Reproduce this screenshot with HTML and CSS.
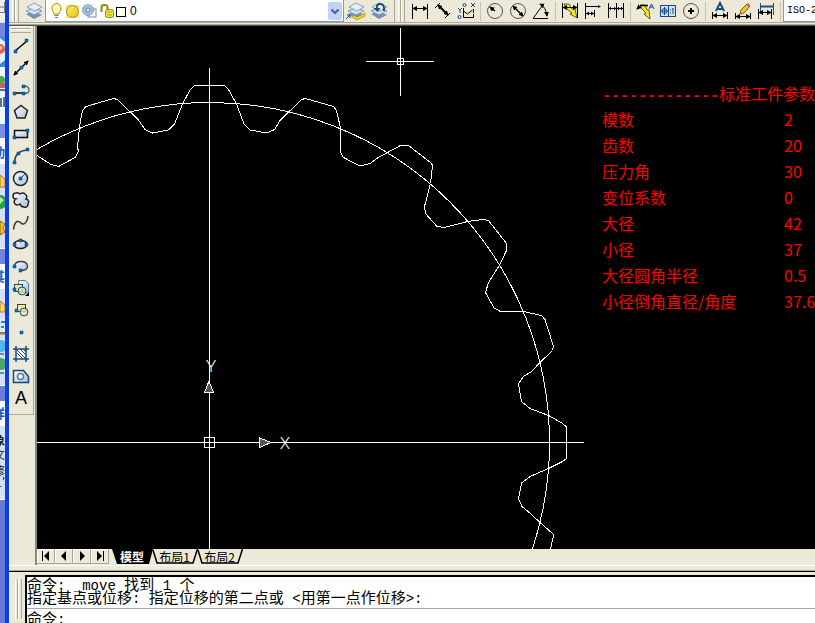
FILE: index.html
```html
<!DOCTYPE html>
<html lang="zh-CN">
<head>
<meta charset="utf-8">
<title>CAD</title>
<link rel="stylesheet" href="styles.css">
</head>
<body>
<svg width="0" height="0" class="defs" aria-hidden="true">
  <defs>
    <linearGradient id="fill" x1="0" y1="0" x2="1" y2="1"><stop offset="0" stop-color="#fff"/><stop offset="1" stop-color="#a9bfd6"/></linearGradient>
    <linearGradient id="sun" x1="0" y1="0" x2="1" y2="1"><stop offset="0" stop-color="#fff45a"/><stop offset="1" stop-color="#f0bc1c"/></linearGradient>
    <marker id="ar" viewBox="0 0 6 6" refX="5" refY="3" markerWidth="5" markerHeight="5" markerUnits="userSpaceOnUse" orient="auto-start-reverse"><path d="M0 0L6 3L0 6z"/></marker>
    <g id="stack"><path d="M2 13l8-3 8 4-8 4z" fill="#7591b4"/><path d="M2 10l8-3 8 3-8 4z" fill="#d4e1ee" stroke="#6f8bae" stroke-width=".8"/><path d="M3 6l7-4 8 4-7 4z" fill="#e4eef8" stroke="#6f8bae" stroke-width=".8"/></g>
    <g id="bolt"><path d="M5 4h5l3 5h3l2 9-7-4 2-1-5-4z" fill="#f6e928" stroke="#5b5a19"/></g>
  </defs>
</svg>

<div class="screen">
  <aside class="desktop" aria-label="desktop">
    <svg width="5" height="623">
      <rect width="5" height="623" fill="#d6dff7"/>
      <rect width="5" height="22" fill="#efeee6"/><path d="M4.500 2V12M0 7h4M0 12.500h5" stroke="#777"/>
      <rect y="23" width="5" height="14" fill="#6f89dc"/>
      <rect y="37" width="5" height="30" fill="#3e86d6"/><path d="M0 38L5 42V60L0 64z" fill="#e5effb"/><circle cy="49" r="5" fill="#ea6248"/><circle cy="48" r="2" fill="#ffd5c8"/>
      <rect y="67" width="5" height="57" fill="#f1f5ff"/><circle cx="1" cy="80" r="4" fill="#48aa55"/><rect y="83" width="5" height="5" fill="#c16652"/><path d="M0 90h5M1 98v9M4 97v10" stroke="#59738d" stroke-width="2"/>
      <rect y="124" width="5" height="14" fill="#7990de"/>
      <rect y="138" width="5" height="26" fill="#fff"/><text x="5" y="157" class="desk-bold">动</text>
      <path d="M0 175l5 4v8H0z" fill="#f6d568" stroke="#a77119"/><circle cy="202" r="7" fill="#2f9b42"/><path d="M0 197l4 3-4 4z" fill="#b6e9b3"/><path d="M0 221l5 3-2 4 2 4-5 3z" fill="#f0bf3e" stroke="#9b6511"/>
      <rect y="248" width="5" height="16" fill="#6f87da"/><path d="M0 248.500h5" stroke="#fff"/>
      <rect y="264" width="5" height="25" fill="#fff"/><text x="5" y="281" class="desk-bold">其</text>
      <path d="M0 301l5 4v7H0z" fill="#f7d96d" stroke="#af7d23"/><rect y="319" width="5" height="13" fill="#dcecff"/><path d="M0 333h5M1 322h4M1 327h3" stroke="#387ad1" stroke-width="2"/><path d="M0 333.500h5" stroke="#b77923" stroke-width="2"/><circle cx="1" cy="346" r="6" fill="#54b5e9"/><circle cx="1" cy="364" r="6" fill="#49a867"/><path d="M0 354h4M0 373h4" stroke="#7186ad" stroke-width="2"/>
      <rect y="385" width="5" height="16" fill="#6a80d8"/><path d="M0 385.500h5" stroke="#fff"/>
      <rect y="401" width="5" height="25" fill="#fff"/><text x="5" y="418" class="desk-bold">详</text>
      <text x="5" y="445" class="desk-text strong">象</text><text x="5" y="459" class="desk-text">文</text><text x="5" y="475" class="desk-text">修</text><text x="5" y="487" class="desk-text">1'</text>
      <rect y="499" width="5" height="124" fill="#667bd5"/><path d="M0 499.500h5" stroke="#fff"/>
    </svg>
  </aside>

  <main class="app">
    <header class="topbar">
      <div class="bar layers">
        <span class="grip"></span>
        <button class="tool" aria-label="Layer properties"><svg width="22" height="22" viewBox="-1 -1 22 22"><use href="#stack"/></svg></button>
        <div class="combo layer-combo">
          <svg class="layer-icons" width="78" height="20">
            <path d="M8 13c0-2-2-3-2-6a4 4 0 0 1 9 0c0 3-2 4-2 6z" fill="#fffbb0" stroke="#a9871d"/><path d="M8.500 14.500h4M9 16.500h3" stroke="#777"/>
            <rect x="20" y="4" width="13" height="13" fill="#ffe94b"/><circle cx="26.500" cy="10.500" r="6" fill="url(#sun)" stroke="#7a8ca0"/>
            <rect x="42" y="8" width="8" height="8" fill="#fff" stroke="#6b87ad"/><circle cx="42" cy="9" r="5.500" fill="#a5bdd9" stroke="#6988af" stroke-dasharray="2 1"/><circle cx="42" cy="9" r="2" fill="#dce7f2" stroke="#6988af"/>
            <path d="M55.500 11V6q0-2 3-2t3 2v3" fill="none" stroke="#8b8b12" stroke-width="2"/><rect x="59.500" y="8.500" width="8" height="8" rx="2" fill="#f3e73b" stroke="#8b8b12"/><path d="M61 11h5M61 14h5" stroke="#aaa41c"/>
            <rect x="70.500" y="6.500" width="9" height="9" fill="#fff" stroke="#000"/>
          </svg>
          <select aria-label="Layer"><option>0</option></select>
          <span class="arrow"><svg width="14" height="18"><path d="M3.500 7.500L7 11l3.500-3.500" fill="none" stroke="#4d6185" stroke-width="2"/></svg></span>
        </div>
        <button class="tool" aria-label="Make object layer current"><svg width="22" height="22" viewBox="-1 -1 22 22"><use href="#stack"/><path d="M7 14l4 2 8-4v3l-8 4-5-3z" fill="#f3d925" stroke="#a18c19" stroke-width=".7"/><path d="M0 18l4-4M1 14h3v3" stroke="#174a83" fill="none"/></svg></button>
        <button class="tool" aria-label="Layer previous"><svg width="22" height="22" viewBox="-1 -1 22 22"><use href="#stack"/><path d="M15 10Q16 2 10 3Q7 4 8 9" fill="none" stroke="#174a83" stroke-width="2"/><path d="M4.500 7h7l-3 4z" fill="#174a83"/></svg></button>
      </div>
      <div class="bar dims">
        <span class="grip"></span>
        <button class="tool" aria-label="Linear"><svg width="22" height="22"><path d="M3.500 4v15M18.500 4v15" stroke="#000"/><path d="M4 8.500h14" stroke="#000" marker-start="url(#ar)" marker-end="url(#ar)"/></svg></button>
        <button class="tool" aria-label="Aligned"><svg width="22" height="22"><path d="M3 8l5-5M13 18l5-5" stroke="#000"/><path d="M6 5l10 10" stroke="#000" stroke-width="2" marker-start="url(#ar)" marker-end="url(#ar)"/></svg></button>
        <button class="tool" aria-label="Ordinate"><svg width="22" height="22"><path d="M8.500 8v9.500h10V14M8.500 11l4 3 5-4M18.500 9v4" stroke="#000" fill="none"/><path d="M3 8l2 2 2-2M5 10v3M16 3l4 4M20 3l-4 4" stroke="#174a83" fill="none"/><circle cx="9.500" cy="5" r="1.500" fill="none" stroke="#174a83"/><circle cx="4.500" cy="17" r="1.500" fill="none" stroke="#174a83"/></svg></button>
        <span class="sep"></span>
        <button class="tool" aria-label="Radius"><svg width="22" height="22"><circle cx="11" cy="11" r="7.500" fill="none" stroke="#555"/><path d="M11 11L6 7" stroke="#000" stroke-width="1.500" marker-end="url(#ar)"/></svg></button>
        <button class="tool" aria-label="Diameter"><svg width="22" height="22"><circle cx="11" cy="11" r="7.500" fill="none" stroke="#555"/><path d="M6 6l10 10" stroke="#000" stroke-width="1.500" marker-start="url(#ar)" marker-end="url(#ar)"/></svg></button>
        <button class="tool" aria-label="Angular"><svg width="22" height="22"><path d="M18 18.500H3L12 6" stroke="#000" fill="none"/><path d="M10 4q6 3 7 12" stroke="#000" fill="none" marker-start="url(#ar)" marker-end="url(#ar)"/></svg></button>
        <span class="sep"></span>
        <button class="tool" aria-label="Quick dimension"><svg width="22" height="22"><use href="#bolt"/><path d="M3.500 3v15M18.500 3v15" stroke="#000"/><path d="M4 7.500h14" stroke="#000" marker-start="url(#ar)" marker-end="url(#ar)"/></svg></button>
        <button class="tool" aria-label="Baseline"><svg width="22" height="22"><path d="M3.500 3v16M12.500 10v7M4 6.500h14M4 13.500h8" stroke="#000"/><path d="M16 5l3 1.500-3 1.500zM4 13.500l3-2v4zM12 13.500l-3-2v4z"/></svg></button>
        <button class="tool" aria-label="Continue"><svg width="22" height="22"><path d="M3.500 3v15M11.500 3v15M18.500 3v15M4 8.500h14" stroke="#000"/><path d="M4 8.500l2-2v4zM11 8.500l-2-2v4zM12 8.500l2-2v4zM18 8.500l-2-2v4z"/></svg></button>
        <span class="sep"></span>
        <button class="tool" aria-label="Quick leader"><svg width="22" height="22"><path d="M6 5h5l2 5h2l1 9-6-5 2-1-4-4z" fill="#f6e928" stroke="#5b5a19"/><path d="M14 5.500H7L3 9" fill="none" stroke="#000" stroke-width="1.500" marker-end="url(#ar)"/><path d="M15 9l2.500-5L20 9M16 7h3" fill="none" stroke="#174a83"/></svg></button>
        <button class="tool" aria-label="Tolerance"><svg width="22" height="22"><rect x="3.500" y="5.500" width="15" height="11" fill="#cfe2f3" stroke="#174a83"/><path d="M11.500 5v12M4 11h7M7.500 7v8M16 8v6M13.500 9.500v1M13.500 12.500v1M15 9h1" stroke="#174a83"/><circle cx="7.500" cy="11" r="2.500" fill="none" stroke="#174a83"/></svg></button>
        <button class="tool" aria-label="Center mark"><svg width="22" height="22"><circle cx="11" cy="11" r="7.500" fill="none" stroke="#555"/><path d="M11 8v6M8 11h6" stroke="#000" stroke-width="2"/></svg></button>
        <span class="sep"></span>
        <button class="tool" aria-label="Dimension edit"><svg width="22" height="22"><path d="M7 11l4-8 4 8M8 9h6" fill="none" stroke="#1b4f86" stroke-width="2"/><path d="M3.500 12v7M18.500 12v7" stroke="#000"/><path d="M4 15.500h14" stroke="#000" marker-start="url(#ar)" marker-end="url(#ar)"/></svg></button>
        <button class="tool" aria-label="Dimension text edit"><svg width="22" height="22"><path d="M3.500 13v6M18.500 13v6" stroke="#000"/><path d="M4 16.500h14" stroke="#000" marker-start="url(#ar)" marker-end="url(#ar)"/><path d="M8 14l1-4 6-6 3 2-6 7z" fill="#f0c936" stroke="#765a1c"/><path d="M14 5l2-2 2 2-1 2z" fill="#c9675d"/></svg></button>
        <button class="tool" aria-label="Dimension update"><svg width="22" height="22"><path d="M5.500 3v9M18.500 3v12" stroke="#1b4f86"/><path d="M6 6.500h12" stroke="#1b4f86" stroke-width="2"/><path d="M3.500 9v10M16.500 9v10" stroke="#000"/><path d="M4 12.500h12" stroke="#000" marker-start="url(#ar)" marker-end="url(#ar)"/></svg></button>
        <span class="sep"></span>
        <div class="combo style-combo"><select aria-label="Dimension style"><option>ISO-25</option></select></div>
      </div>
    </header>

    <div class="workspace">
      <div class="side">
        <nav class="toolbox" aria-label="Draw">
          <span class="grip-h"></span>
          <button class="draw" aria-label="Line"><svg width="22" height="22"><path d="M5 16L17 6" stroke="#000" stroke-width="1.500"/><path class="pt" d="M4 15h3v3H4zM15 4h3v3h-3z"/></svg></button>
          <button class="draw" aria-label="Construction line"><svg width="22" height="22"><path d="M4 18L18 4" stroke="#000" stroke-width="1.500" marker-start="url(#ar)" marker-end="url(#ar)"/><path class="pt" d="M10 9h3v3h-3z"/></svg></button>
          <button class="draw" aria-label="Polyline"><svg width="22" height="22"><path d="M4 14h10" stroke="#000" stroke-width="1.500"/><path d="M14 7q5 0 5 4t-5 3" fill="none" stroke="#666" stroke-width="1.500"/><path class="pt" d="M3 13h3v3H3zM12 13h3v3h-3zM12 6h3v3h-3z"/></svg></button>
          <button class="draw" aria-label="Polygon"><svg width="22" height="22"><path d="M11 4.500l6.500 5L15 17H7L4.500 9.500z" fill="url(#fill)" stroke="#222" stroke-width="1.500"/></svg></button>
          <button class="draw" aria-label="Rectangle"><svg width="22" height="22"><path d="M4.500 7.500h13v7h-13z" fill="url(#fill)" stroke="#111" stroke-width="1.500"/><path class="pt" d="M3 13h3v3H3zM16 6h3v3h-3z"/></svg></button>
          <button class="draw" aria-label="Arc"><svg width="22" height="22"><path d="M4.500 17Q5 6 17 5" fill="none" stroke="#444" stroke-width="1.500"/><path class="pt" d="M3 16h3v3H3zM7 7h3v3H7zM16 3h3v3h-3z"/></svg></button>
          <button class="draw" aria-label="Circle"><svg width="22" height="22"><circle cx="10.500" cy="11.500" r="7" fill="url(#fill)" stroke="#222" stroke-width="1.500"/><path d="M10 12l5-5" stroke="#174a83"/><path class="pt" d="M9 10h3v3H9z"/></svg></button>
          <button class="draw" aria-label="Revision cloud"><svg width="22" height="22"><path d="M6 10a3 3 0 0 1 0-6q2-1 4 1 3-2 5 0 3 2 1 5 4 1 2 5 0 4-4 3-3 0-4-3-3 2-5 0-2-3 1-5z" fill="url(#fill)" stroke="#222" stroke-width="1.500"/></svg></button>
          <button class="draw" aria-label="Spline"><svg width="22" height="22"><path d="M3.500 18.500C5 8 9 10 11 12S17 13 18 5" fill="none" stroke="#333" stroke-width="1.500"/></svg></button>
          <button class="draw" aria-label="Ellipse"><svg width="22" height="22"><ellipse cx="10.500" cy="11.500" rx="6.500" ry="4" fill="url(#fill)" stroke="#222" stroke-width="1.500"/><path class="pt" d="M3 10h3v3H3zM15 10h3v3h-3zM9 6h3v3H9z"/></svg></button>
          <button class="draw" aria-label="Ellipse arc"><svg width="22" height="22"><path d="M4.500 11Q5 6.500 11 6.500T17.500 11 10 15.500" fill="url(#fill)" stroke="#444" stroke-width="1.500"/><path class="pt" d="M3 10h3v3H3zM9 14h3v3H9z"/></svg></button>
          <button class="draw" aria-label="Insert block"><svg width="22" height="22"><path d="M8.500 3.500h7l3 3v9h-10z" fill="url(#fill)" stroke="#527ba4"/><rect x="4.500" y="7.500" width="8" height="7" fill="#f5ea8c" stroke="#174a83"/><circle cx="12" cy="14" r="4" fill="#e5dfa0" fill-opacity=".8" stroke="#174a83"/><path class="pt" d="M3 11h3v3H3z"/><path d="M19 15v4h-4z"/></svg></button>
          <button class="draw" aria-label="Make block"><svg width="22" height="22"><rect x="7.500" y="5.500" width="8" height="7" fill="#f5ea8c" stroke="#174a83"/><circle cx="14" cy="13" r="4" fill="#e5dfa0" fill-opacity=".8" stroke="#174a83"/><path class="pt" d="M5 10h3v3H5z"/></svg></button>
          <button class="draw" aria-label="Point"><svg width="22" height="22"><path class="pt" d="M10 10h3v3h-3z"/></svg></button>
          <button class="draw" aria-label="Hatch"><svg width="22" height="22"><path d="M6 6h10v10H6z" fill="#fff"/><path d="M7 10l6 6M7 7l9 9M10 6l6 6M13 6l3 3" stroke="#174a83"/><path d="M3 6h16M3 16h16M6 3v16M16 3v16" stroke="#174a83" stroke-width="1.500"/></svg></button>
          <button class="draw" aria-label="Region"><svg width="22" height="22"><path d="M3.500 5.500h10l5 6v6h-15z" fill="url(#fill)" stroke="#174a83" stroke-width="1.500"/><circle cx="10.500" cy="11.500" r="3" fill="#fff" stroke="#527ba4" stroke-width="1.500"/></svg></button>
          <button class="draw letter" aria-label="Multiline text">A</button>
        </nav>
      </div>

      <section class="view">
        <div class="canvas">
          <svg class="drawing" width="100%" height="100%">
            <g transform="translate(-37 -26)" class="ink">
              <path d="M209.500 68V549M37 442.500H584"/>
              <rect x="204.500" y="437.500" width="10" height="10"/>
              <circle cx="209.500" cy="442.500" r="340"/>
              <path d="M37 155.500L51 164.500 58.500 166.500 75 157.500 78.500 151.500 77.500 147.500 79.500 126.500 82.500 110.500 86 106.500 113.500 98.500 117.500 99.500 138.500 120 145 129.500 152.500 133 168.500 130 174.500 124 182.500 104 190 90 194.500 85.500H224.500L228.500 89.500 236.500 104 244 124 250 130 267 133 274.500 129.500 280 120.500 301.500 99.500 305.500 98.500 333.500 106.500 336.500 110.500 340.500 128V152.500L343.500 157.500 360 166 370 163.500 377.500 158 400.500 145.500H408.500L430.500 162.500 432.500 165 430.500 183.500 424.500 206.500 425.500 213.500 437 226.500 444.500 227.500 467.500 221.500 483.500 219.500 488.500 220.500 506.500 243.500V250.500L499.500 265 488.500 282.500 485.500 292.500 494 308 500.500 311.500H523.500L541.500 315.500 545 319.500 553.500 346.500 552.500 350.500 540 362.500 531 372 523.500 376.500 518.500 383.500 521.500 401.500 530 408.500 548.500 415.500 562.500 423.500 566.500 427V458.500L562.500 461.500 548.500 468.500 530 476.500 521.500 483 518.500 499 522 506.500 531 514 540 522.500 553.500 534.500 553 538 550.500 549"/>
              <path d="M400.500 28V96M366 61.500H434M397.500 58.500h6v6h-6z"/>
              <path d="M209 381L204.500 392.500H213.500zM259.500 438V447.500L271 442.500z" class="arrowhead"/>
            </g>
            <text x="174" y="346" class="axis">Y</text><text x="248" y="423" class="axis">X</text>
          </svg>
          <table class="params">
            <caption><span class="dash">-------------</span>标准工件参数<span class="dash">-</span></caption>
            <tbody>
              <tr><th scope="row">模数</th><td>2</td></tr>
              <tr><th scope="row">齿数</th><td>20</td></tr>
              <tr><th scope="row">压力角</th><td>30</td></tr>
              <tr><th scope="row">变位系数</th><td>0</td></tr>
              <tr><th scope="row">大径</th><td>42</td></tr>
              <tr><th scope="row">小径</th><td>37</td></tr>
              <tr><th scope="row">大径圆角半径</th><td>0.5</td></tr>
              <tr><th scope="row">小径倒角直径/角度</th><td>37.6</td></tr>
            </tbody>
          </table>
        </div>
        <div class="tabs">
          <button class="step" aria-label="First"><svg width="10" height="10"><path d="M1 0h1v10H1zM8 0v10L3 5z"/></svg></button>
          <button class="step" aria-label="Previous"><svg width="10" height="10"><path d="M7 0v10L2 5z"/></svg></button>
          <button class="step" aria-label="Next"><svg width="10" height="10"><path d="M3 0v10l5-5z"/></svg></button>
          <button class="step" aria-label="Last"><svg width="10" height="10"><path d="M2 0v10l5-5zM8 0h1v10H8z"/></svg></button>
          <button class="tab active"><svg width="41" height="15"><path d="M0 0h41l-4 15H5z"/></svg><span>模型</span></button>
          <button class="tab"><svg width="46" height="15"><path d="M1 1l4 13h36L45.500 0" fill="none" stroke="#000" stroke-width="1.500"/></svg><span>布局1</span></button>
          <button class="tab"><svg width="46" height="15"><path d="M1 1l4 13h36L45.500 0" fill="none" stroke="#000" stroke-width="1.500"/></svg><span>布局2</span></button>
        </div>
      </section>
    </div>

    <footer class="command">
      <span class="grip tall"></span>
      <div class="console">
        <div class="log">
          <p>命令<i>: _move </i>找到<i> 1 </i>个</p>
          <p>指定基点或位移<i>: </i>指定位移的第二点或<i> &lt;</i>用第一点作位移<i>&gt;:</i></p>
        </div>
        <div class="prompt"><label for="cmd">命令<i>:</i></label><input id="cmd" type="text"></div>
      </div>
    </footer>
  </main>
</div>
</body>
</html>
```
FILE: styles.css
```css
* { box-sizing: border-box; }
body {
  margin: 0;
  overflow: hidden;
  background: #ece9d8;
  color: #000;
  font: 12px "Liberation Sans", "Noto Sans CJK SC", sans-serif;
}
button, select, input {
  margin: 0;
  padding: 0;
  border: 0;
  border-radius: 0;
  background: none;
  color: inherit;
  font: inherit;
  appearance: none;
}
svg { display: block; flex: none; }
.defs { position: absolute; }

.screen { display: flex; height: 100vh; }
.desktop {
  flex: none;
  width: 9px;
  overflow: hidden;
  background: #667bd5;
  border-right: 4px solid #0a3fe0;
}
.desk-bold, .desk-text { font: bold 13px "Noto Sans CJK SC", sans-serif; text-anchor: end; fill: #215dc6; }
.desk-text { font-size: 11px; font-weight: normal; fill: #111; }
.strong { font-weight: bold; }

.app { flex: 1; min-width: 0; display: flex; flex-direction: column; background: #ece9d8; }

/* top toolbars */
.topbar {
  display: flex;
  flex: none;
  height: 26px;
  border-bottom: 1px solid #55534a;
  box-shadow: inset 0 -1px #aca899;
}
.bar { display: flex; align-items: center; height: 23px; border-bottom: 1px solid #aca899; }
.layers { flex: none; width: 386px; padding: 0 4px 0 3px; border-right: 1px solid #aca899; }
.dims { flex: 1; min-width: 0; padding-left: 3px; overflow: hidden; }
.grip {
  flex: none;
  width: 7px;
  height: 22px;
  margin-right: 3px;
  border-right: 1px solid #aca899;
  background: linear-gradient(90deg, #fff 1px, #ece9d8 1px, #ece9d8 2px, #aca899 2px, #aca899 3px, #fff 3px, #fff 4px, #ece9d8 4px);
}
.tool { display: flex; justify-content: center; flex: none; width: 23px; height: 22px; }
.sep { flex: none; width: 6px; height: 19px; background: linear-gradient(90deg, transparent 3px, #c5c2b0 3px, #c5c2b0 4px, transparent 4px); }
.combo { display: flex; align-items: center; background: #fff; border: 1px solid #7f9db9; border-top: 0; height: 22px; }
.combo select { flex: 1; min-width: 0; height: 20px; font-size: 12px; }
.layer-combo { flex: 1; }
.layer-icons { overflow: visible; margin-right: 6px; }
.arrow { flex: none; width: 14px; height: 18px; margin-right: 1px; background: #c1d3fb; border-radius: 2px; pointer-events: none; }
.style-combo { flex: 1; min-width: 0; padding-left: 3px; border-right: 0; }
.combo.style-combo select { font: 10px "Liberation Mono", monospace; text-overflow: clip; }

/* drawing toolbox */
.workspace { flex: 1; min-height: 0; display: flex; border-bottom: 1px solid #fff; }
.side { flex: none; width: 28px; border-right: 2px solid #8b887a; }
.toolbox {
  display: flex;
  flex-direction: column;
  width: 25px;
  padding: 0 1px 5px;
  border-right: 1px solid #aca899;
  border-bottom: 1px solid #aca899;
}
.grip-h { height: 7px; margin: 0 1px 2px; border-bottom: 1px solid #aca899; background: linear-gradient(#fff 1px, #ece9d8 1px, #ece9d8 2px, #aca899 2px, #aca899 3px, #fff 3px, #fff 4px, #ece9d8 4px); }
.draw { display: flex; align-items: center; justify-content: center; width: 22px; height: 22px; }
.letter { font-size: 18px; }
.pt { fill: #0072c6; stroke: #003d7a; stroke-width: 0.5px; }

/* model space */
.view { flex: 1; min-width: 0; display: flex; flex-direction: column; }
.canvas { position: relative; flex: 1; min-height: 0; overflow: hidden; background: #000; }
.ink { fill: none; stroke: #fff; stroke-width: 1px; shape-rendering: crispEdges; }
.arrowhead { fill: #555; }
.axis { font: 300 17px Roboto, "Open Sans", sans-serif; text-anchor: middle; fill: #fff; }
.params {
  position: absolute;
  left: 565px;
  top: 54px;
  border-collapse: collapse;
  color: #f00;
  font: 16px/26px "Noto Sans CJK SC", sans-serif;
  white-space: nowrap;
}
.params caption { height: 26px; text-align: left; }
.params th, .params td { height: 26px; padding: 0; text-align: left; font-weight: inherit; }
.params th { width: 182px; }
.dash { font: bold 15px/20px "Liberation Mono", monospace; }

/* layout tabs */
.tabs { display: flex; flex: none; height: 16px; }
.step { display: flex; align-items: center; justify-content: center; width: 18px; height: 15px; border: solid #aca899; border-width: 0 1px 1px 0; box-shadow: inset 1px 1px #fff; }
.tab { position: relative; width: 45px; height: 15px; }
.tab svg { position: absolute; left: 0; top: 0; }
.tab span { position: relative; display: block; font: 12px/12px "Noto Sans CJK SC", sans-serif; }
.step + .tab { width: 40px; margin-left: 3px; }
.active span { color: #fff; font-weight: bold; }

/* command line */
.command { display: flex; flex: none; height: 56px; margin-top: 1px; padding: 8px 0 0 6px; background: linear-gradient(#ece9d8 3px, #aca899 3px, #aca899 4px, #000 4px, #000 5px, #ece9d8 5px); }
.tall { height: 40px; margin-top: 4px; margin-right: 3px; }
.console { flex: 1; min-width: 0; background: #fff; border: solid #000; border-width: 2px 0 0 2px; font: 15px/13px "Noto Sans CJK SC", sans-serif; white-space: nowrap; overflow: hidden; }
.console i { font: 14px/1px "Liberation Mono", monospace; white-space: pre; }
.console p { margin: 0; }
.log { height: 32px; border-bottom: 1px solid #aca899; }
.prompt { display: flex; padding-top: 2px; }
.prompt input { flex: 1; min-width: 0; height: 13px; outline: 0; }
```
